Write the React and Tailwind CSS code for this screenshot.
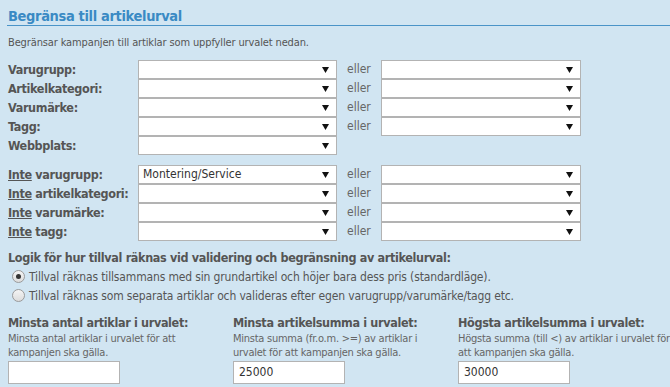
import React from 'react'

const font = { fontFamily: '"DejaVu Sans Condensed", "DejaVu Sans", Verdana, sans-serif' }

function Arrow() {
  return (
    <svg width="7" height="6" viewBox="0 0 7 6" className="absolute right-[7px] top-[6px]">
      <path d="M0 0 H7 L3.5 6 Z" fill="#111" />
    </svg>
  )
}

function Select({ value, className = '' }) {
  return (
    <div className={`relative shrink-0 h-[19px] bg-white border border-[#b3b3b3] text-[12px] text-[#333] leading-[17px] pl-[4px] ${className}`}>
      {value}
      <Arrow />
    </div>
  )
}

function Row({ label, inte, eller = true, value }) {
  return (
    <div className="flex items-center h-[19px]">
      <div className="w-[130px] shrink-0 text-[12.5px] font-bold text-[#555] leading-[19px] tracking-[-0.35px] whitespace-nowrap">
        {inte && <span className="underline">Inte</span>}
        {inte ? ' ' : ''}
        {label}
      </div>
      <Select value={value} className="w-[199px]" />
      {eller && (
        <>
          <div className="w-[44px] shrink-0 pl-[10px] text-[12px] text-[#666] leading-[19px]">eller</div>
          <Select className="w-[200px]" />
        </>
      )}
    </div>
  )
}

function Radio({ checked, children }) {
  return (
    <div className="flex items-center h-[19px] pl-[4px] text-[12px] text-[#555] tracking-[-0.15px]">
      <span className="w-[13px] h-[13px] rounded-full border border-[#9a9a9a] bg-gradient-to-b from-[#f4f4f4] to-[#dcdcdc] flex items-center justify-center mr-[4px]">
        {checked && <span className="w-[5px] h-[5px] rounded-full bg-[#333]" />}
      </span>
      {children}
    </div>
  )
}

function Limit({ title, desc, value }) {
  return (
    <div className="w-[225px] shrink-0">
      <div className="text-[12.5px] font-bold text-[#555] leading-[16px] tracking-[-0.35px]">{title}</div>
      <div className="text-[11px] text-[#666] leading-[14px] mt-[1px] h-[28px] w-[212px] tracking-[-0.25px]">{desc}</div>
      <div className="mt-[1px] w-[112px] h-[23px] bg-white border border-[#b3b3b3] text-[12px] text-[#333] leading-[21px] pl-[5px]">
        {value}
      </div>
    </div>
  )
}

export default function App() {
  return (
    <div style={font} className="w-[670px] h-[387px] bg-[#d1e5f2] overflow-hidden">
      <div className="pl-[7px] pt-[8px]">
        <div className="border-b border-[#4a94c8] pb-[1px]">
          <h1 className="text-[14.5px] font-bold text-[#3a8ac4] leading-[16px] pl-[1px] tracking-[-0.35px]">Begränsa till artikelurval</h1>
        </div>
      </div>
      <div className="pl-[8px]">
        <p className="mt-[10px] text-[11px] text-[#555] leading-[14px] tracking-[-0.13px]">
          Begränsar kampanjen till artiklar som uppfyller urvalet nedan.
        </p>
        <div className="mt-[10px]">
          <Row label="Varugrupp:" />
          <Row label="Artikelkategori:" />
          <Row label="Varumärke:" />
          <Row label="Tagg:" />
          <Row label="Webbplats:" eller={false} />
        </div>
        <div className="mt-[10px]">
          <Row inte label="varugrupp:" value="Montering/Service" />
          <Row inte label="artikelkategori:" />
          <Row inte label="varumärke:" />
          <Row inte label="tagg:" />
        </div>
        <div className="mt-[9px] text-[12.5px] font-bold text-[#555] leading-[16px] tracking-[-0.35px]">
          Logik för hur tillval räknas vid validering och begränsning av artikelurval:
        </div>
        <div className="mt-[1px]">
          <Radio checked>Tillval räknas tillsammans med sin grundartikel och höjer bara dess pris (standardläge).</Radio>
          <Radio>Tillval räknas som separata artiklar och valideras efter egen varugrupp/varumärke/tagg etc.</Radio>
        </div>
        <div className="flex mt-[10px]">
          <Limit title="Minsta antal artiklar i urvalet:" desc="Minsta antal artiklar i urvalet för att kampanjen ska gälla." value="" />
          <Limit title="Minsta artikelsumma i urvalet:" desc="Minsta summa (fr.o.m. >=) av artiklar i urvalet för att kampanjen ska gälla." value="25000" />
          <Limit title="Högsta artikelsumma i urvalet:" desc="Högsta summa (till <) av artiklar i urvalet för att kampanjen ska gälla." value="30000" />
        </div>
      </div>
    </div>
  )
}
